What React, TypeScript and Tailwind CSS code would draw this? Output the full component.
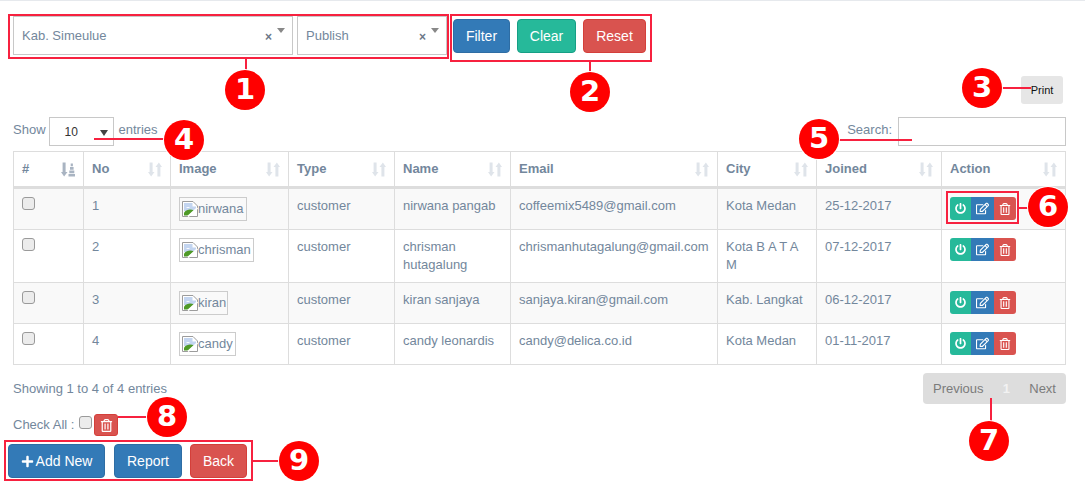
import { FaPowerOff, FaRegEdit, FaRegTrashAlt, FaPlus } from "react-icons/fa";

const rows = [
    { no: "1", alt: "nirwana", imgW: "w-[68px]", name: "nirwana pangab", email: "coffeemix5489@gmail.com", city: "Kota Medan", joined: "25-12-2017", h: "h-[42px]" },
    { no: "2", alt: "chrisman", imgW: "w-[75px]", name: "chrisman hutagalung", email: "chrismanhutagalung@gmail.com", city: "Kota B A T A M", joined: "07-12-2017", h: "h-[53px]" },
    { no: "3", alt: "kiran", imgW: "w-[49px]", name: "kiran sanjaya", email: "sanjaya.kiran@gmail.com", city: "Kab. Langkat", joined: "06-12-2017", h: "h-[41px]" },
    { no: "4", alt: "candy", imgW: "w-[57px]", name: "candy leonardis", email: "candy@delica.co.id", city: "Kota Medan", joined: "01-11-2017", h: "h-[41px]" },
];

const columns = [
    { label: "No", w: "w-[87px]" },
    { label: "Image", w: "w-[118px]" },
    { label: "Type", w: "w-[106px]" },
    { label: "Name", w: "w-[116px]" },
    { label: "Email", w: "w-[207px]" },
    { label: "City", w: "w-[99px]" },
    { label: "Joined", w: "w-[125px]" },
    { label: "Action", w: "w-[124px]" },
];

const SortIcon = ({ active }: { active?: boolean }) => (
    <svg width="14" height="15" viewBox="0 0 14 15" className={active ? "text-[#a9b4c2]" : "text-[#dfe4ea]"} fill="currentColor">
        <path d="M1.6 0.5h3v9.5h1.9L3.1 14.5 0 10h1.6z" />
        {active ? (
            <path d="M7.5 12h6.5v2.5H7.500zM8.300 8.500h5v2.800h-5zM9 5h3.600v2.800H9zM9.700 1.500h2.200v2.800H9.700z" />
        ) : (
            <path d="M10.900 0.500L14 5h-1.600v9.500h-3V5H7.500z" />
        )}
    </svg>
);

const BrokenImage = () => (
    <svg width="16" height="16" viewBox="0 0 16 16" className="shrink-0">
        <path d="M0.500 0.500H11L15.500 5V15.500H0.500Z" fill="#fff" stroke="#9c9c9c" />
        <path d="M2 2h8.500v3.500H14V10L2 10z" fill="#c3d5f0" />
        <path d="M4 7c1-1.500 3-1.500 4 0z" fill="#fff" />
        <path d="M2 14.500v-3C5 8 9 8 12 9.500L6.500 14.500z" fill="#4f9a28" />
        <path d="M6 15.500L15.500 7" stroke="#fff" strokeWidth="1.800" />
    </svg>
);

const Check = () => (
    <input type="checkbox" className="block h-[13px] w-[13px] appearance-none rounded-[3px] border border-[#9a9a9a] bg-[#ececec]" />
);

const Badge = ({ n, className }: { n: string; className: string }) => (
    <div className={`absolute flex h-[40px] w-[40px] items-center justify-center rounded-full bg-[#f00] font-['DejaVu_Sans',sans-serif] text-[29px] font-bold text-white shadow-[0_0_0_1px_#fff] ${className}`}>
        {n}
    </div>
);

const Line = ({ className }: { className: string }) => <div className={`absolute bg-[#f7213f] ${className}`} />;

const Select = ({ label, className }: { label: string; className: string }) => (
    <div className={`relative flex h-[39px] items-center border border-[#c8c8c8] pl-2 text-[13px] ${className}`}>
        <span>{label}</span>
        <span className="absolute right-[20px] top-[12px] text-[12px] font-bold leading-[16px] text-[#6b7788]">×</span>
        <span className="absolute right-[7px] top-[11px] h-0 w-0 border-x-[4px] border-t-[5px] border-x-transparent border-t-[#888]" />
    </div>
);

export default function App() {
    return (
        <div className="relative h-[492px] w-[1085px] overflow-hidden border-t border-[#e6e9ed] bg-white font-['Liberation_Sans',Arial,sans-serif] text-[13px] text-[#73879c]">
            {/* filter bar */}
            <div className="flex items-start pl-2 pt-[13px]">
                <div className="flex h-[45px] w-[441px] gap-1 border-2 border-[#f7213f] pl-[3px]">
                    <Select label="Kab. Simeulue" className="w-[280px]" />
                    <Select label="Publish" className="w-[150px]" />
                </div>
                <div className="ml-[1px] flex h-[48px] w-[202px] gap-[7px] border-2 border-[#f7213f] pl-[1px] pt-[3px]">
                    <button className="h-[34px] w-[57px] rounded border border-[#2e6da4] bg-[#337ab7] text-sm text-white">Filter</button>
                    <button className="h-[34px] w-[59px] rounded border border-[#169f85] bg-[#26b99a] text-sm text-white">Clear</button>
                    <button className="h-[34px] w-[63px] rounded border border-[#d43f3a] bg-[#d9534f] text-sm text-white">Reset</button>
                </div>
            </div>

            <div className="mt-[14px] flex justify-end pr-[22px]">
                <button className="h-[28px] w-[42px] rounded-[3px] bg-[#e6e6e6] text-[11px] text-[#111]">Print</button>
            </div>

            <div className="mt-[13px] flex h-[29px] items-center justify-between pl-[13px] pr-[19px]">
                <div className="flex items-center">
                    <span className="-mt-[3px]">Show</span>
                    <div className="relative ml-[3px] h-[29px] w-[65px] border border-[#c8c8c8] pl-[15px] text-[12px] leading-[29px] text-[#333]">
                        10
                        <span className="absolute right-[5px] top-[12px] h-0 w-0 border-x-[4px] border-t-[6px] border-x-transparent border-t-[#444]" />
                    </div>
                    <span className="-mt-[3px] ml-[5px]">entries</span>
                </div>
                <div className="flex items-center gap-[6px]">
                    <span className="-mt-[3px]">Search:</span>
                    <input className="h-[29px] w-[168px] border border-[#c8c8c8]" />
                </div>
            </div>

            {/* table */}
            <div className="ml-[13px] mt-[5px] w-[1053px]">
                <table className="w-full table-fixed border-collapse border border-[#dddddd]">
                    <thead>
                        <tr className="h-[36px] border-b-[3px] border-[#dddddd]">
                            <th className="w-[70px] border border-[#dddddd] px-2 text-left align-middle">
                                <div className="flex items-center justify-between">
                                    <span>#</span>
                                    <SortIcon active />
                                </div>
                            </th>
                            {columns.map((col) => (
                                <th key={col.label} className={`border border-[#dddddd] px-2 text-left align-middle ${col.w}`}>
                                    <div className="flex items-center justify-between">
                                        <span>{col.label}</span>
                                        <SortIcon />
                                    </div>
                                </th>
                            ))}
                        </tr>
                    </thead>
                    <tbody>
                        {rows.map((row, i) => (
                            <tr key={row.no} className={`${row.h} ${i % 2 === 0 ? "bg-[#f9f9f9]" : "bg-white"}`}>
                                <td className="border border-[#dddddd] px-2 pt-2 align-top"><Check /></td>
                                <td className="border border-[#dddddd] px-2 pt-2 align-top leading-[18px]">{row.no}</td>
                                <td className="border border-[#dddddd] px-2 pt-2 align-top">
                                    <div className={`flex h-[24px] items-center border border-[#cccccc] pl-[2px] ${row.imgW}`}>
                                        <BrokenImage />
                                        <span className="leading-[18px]">{row.alt}</span>
                                    </div>
                                </td>
                                <td className="border border-[#dddddd] px-2 pt-2 align-top leading-[18px]">customer</td>
                                <td className="border border-[#dddddd] px-2 pt-2 align-top leading-[18px]">{row.name}</td>
                                <td className="border border-[#dddddd] px-2 pt-2 align-top leading-[18px]">{row.email}</td>
                                <td className="border border-[#dddddd] px-2 pt-2 align-top leading-[18px]">{row.city}</td>
                                <td className="border border-[#dddddd] px-2 pt-2 align-top leading-[18px]">{row.joined}</td>
                                <td className="border border-[#dddddd] pl-2 pt-2 align-top">
                                    <div className="flex h-[23px] w-[66px] overflow-hidden rounded-[3px] text-[13px] text-white">
                                        <span className="flex w-[21px] items-center justify-center bg-[#26b99a] text-[11px]"><FaPowerOff /></span>
                                        <span className="flex w-[23px] items-center justify-center bg-[#337ab7]"><FaRegEdit /></span>
                                        <span className="flex w-[22px] items-center justify-center bg-[#d9534f] text-[12px]"><FaRegTrashAlt /></span>
                                    </div>
                                </td>
                            </tr>
                        ))}
                    </tbody>
                </table>
            </div>

            {/* footer of the table */}
            <div className="flex items-start justify-between pl-[13px] pr-[19px] pt-[8px]">
                <div className="pt-[7px] leading-[18px]">Showing 1 to 4 of 4 entries</div>
                <div className="flex h-[31px] w-[143px] items-center justify-between rounded bg-[#dddddd] px-[10px] text-[#7b7b7b]">
                    <span>Previous</span>
                    <span className="font-bold text-[#f2f2f2]">1</span>
                    <span>Next</span>
                </div>
            </div>

            <div className="mt-[10px] flex h-[22px] items-center pl-[13px]">
                <span>Check All :</span>
                <span className="ml-[5px] -mt-[5px]"><Check /></span>
                <span className="ml-[2px] flex h-[22px] w-[24px] items-center justify-center rounded-[3px] border border-[#d43f3a] bg-[#d9534f] text-[13px] text-white"><FaRegTrashAlt /></span>
            </div>

            <div className="ml-[4px] mt-[4px] flex h-[41px] w-[249px] gap-[9px] border-2 border-[#f7213f] pl-[2px] pt-[2px]">
                <button className="flex h-[34px] w-[97px] items-center justify-center gap-[2px] rounded border border-[#2e6da4] bg-[#337ab7] text-sm text-white"><FaPlus className="text-[13px]" />Add New</button>
                <button className="h-[34px] w-[68px] rounded border border-[#2e6da4] bg-[#337ab7] text-sm text-white">Report</button>
                <button className="-ml-[1px] h-[34px] w-[57px] rounded border border-[#d43f3a] bg-[#d9534f] text-sm text-white">Back</button>
            </div>

            {/* annotations over the page */}
            <div className="absolute left-[946px] top-[190px] h-[33px] w-[73px] border-2 border-[#f7213f]" />
            <Line className="left-[245px] top-[57px] h-[15px] w-[2px]" />
            <Line className="left-[589px] top-[60px] h-[14px] w-[2px]" />
            <Line className="left-[1001px] top-[86px] h-[2px] w-[30px]" />
            <Line className="left-[94px] top-[137px] h-[2px] w-[72px]" />
            <Line className="left-[838px] top-[138px] h-[2px] w-[74px]" />
            <Line className="left-[1019px] top-[206px] h-[2px] w-[12px]" />
            <Line className="left-[990px] top-[397px] h-[25px] w-[2px]" />
            <Line className="left-[118px] top-[415px] h-[2px] w-[32px]" />
            <Line className="left-[252px] top-[459px] h-[2px] w-[34px]" />
            <Badge n="1" className="left-[225px] top-[69px]" />
            <Badge n="2" className="left-[570px] top-[71px]" />
            <Badge n="3" className="left-[962px] top-[67px]" />
            <Badge n="4" className="left-[164px] top-[119px]" />
            <Badge n="5" className="left-[799px] top-[118px]" />
            <Badge n="6" className="left-[1028px] top-[186px]" />
            <Badge n="7" className="left-[969px] top-[420px]" />
            <Badge n="8" className="left-[147px] top-[396px]" />
            <Badge n="9" className="left-[279px] top-[440px]" />
        </div>
    );
}
